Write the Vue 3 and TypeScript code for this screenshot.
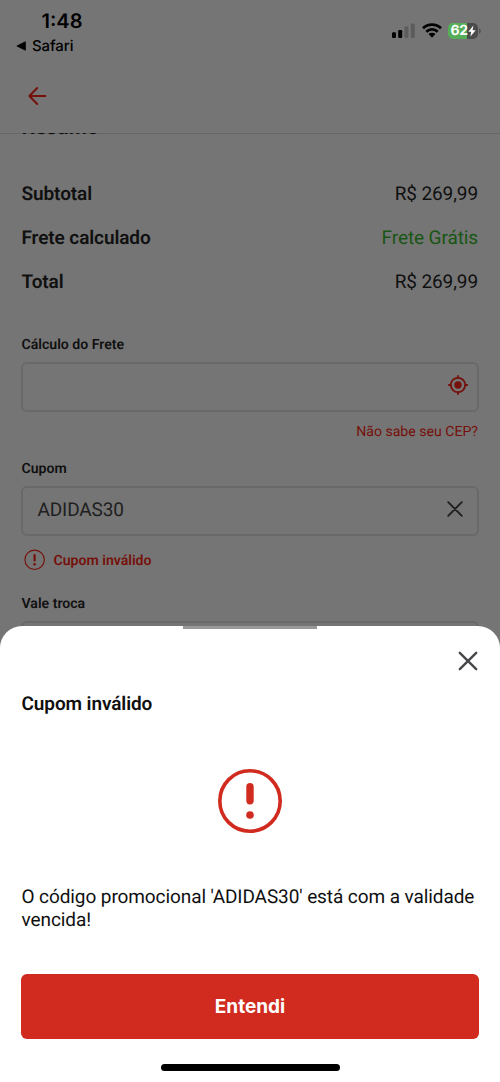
<script setup lang="ts">
interface SummaryRow {
  label: string
  value: string
  free?: boolean
}

const rows: SummaryRow[] = [
  { label: 'Subtotal', value: 'R$ 269,99' },
  { label: 'Frete calculado', value: 'Frete Grátis', free: true },
  { label: 'Total', value: 'R$ 269,99' },
]
</script>

<template>
  <div class="screen">
    <header class="top">
      <div class="status">
        <div class="status-left">
          <div class="time">1:48</div>
          <div class="back-app">
            <svg width="10" height="10" viewBox="0 0 10 10"><path d="M9.4 .8v8.4L.9 5z" fill="#000" stroke="#000" stroke-width=".8" stroke-linejoin="round" /></svg>
            <span>Safari</span>
          </div>
        </div>
        <div class="status-right">
          <svg class="signal" width="24" height="16" viewBox="0 0 24 16">
            <rect x="0" y="9.3" width="4" height="5.7" rx="1.2" />
            <rect x="6.2" y="7" width="4" height="8" rx="1.2" />
            <rect x="12.4" y="3.4" width="4" height="11.6" rx="1.2" fill="#5c5c5c" />
            <rect x="18.8" y=".5" width="4" height="14.5" rx="1.2" fill="#5c5c5c" />
          </svg>
          <svg class="wifi" width="20" height="15" viewBox="0 0 20 15">
            <g fill="none" stroke="#000" stroke-width="2.7">
              <path d="M1 5.2C6 .3 14 .3 19 5.2" />
              <path d="M4.3 8.7c3.2-3.1 8.2-3.1 11.4 0" />
            </g>
            <path d="M6.5 11.1c2-1.8 5-1.8 7 0L10 14.7z" />
          </svg>
          <div class="battery">
            <span>62</span>
            <svg width="8" height="12" viewBox="0 0 8 12"><path d="M5.4.4.3 6.7h2.9L2.4 11.6 7.7 5.3H4.6z" fill="#fff" /></svg>
          </div>
          <svg class="tip" width="2" height="6" viewBox="0 0 2 6"><path d="M0 .3C2.6 1.2 2.6 4.8 0 5.7z" fill="#575757" /></svg>
        </div>
      </div>
      <svg class="arrow" width="20" height="20" viewBox="0 0 20 20" fill="none" stroke="#75100a" stroke-width="2" stroke-linecap="round" stroke-linejoin="round"><path d="M10.2 2 2.4 10l7.8 8M2.4 10h16" /></svg>
    </header>

    <main>
      <div class="clip"><h2>Resumo</h2></div>
      <div class="summary">
        <div v-for="row in rows" :key="row.label" class="row">
          <strong>{{ row.label }}</strong>
          <span :class="{ free: row.free }">{{ row.value }}</span>
        </div>
      </div>

      <label class="frete-label">Cálculo do Frete</label>
      <div class="field">
        <svg class="locate" width="20" height="20" viewBox="0 0 20 20" fill="none" stroke="#75100a" stroke-width="1.8">
          <circle cx="10" cy="10" r="7.2" /><circle cx="10" cy="10" r="3.7" fill="#75100a" stroke="none" />
          <path d="M10 .2v3M10 16.8v3M.2 10h3M16.8 10h3" />
        </svg>
      </div>
      <a class="cep">Não sabe seu CEP?</a>

      <label class="cupom-label">Cupom</label>
      <div class="field">
        <span>ADIDAS30</span>
        <svg class="clear" width="16" height="16" viewBox="0 0 16 16" fill="none" stroke="#202020" stroke-width="1.9" stroke-linecap="round"><path d="m1.2 1.2 13.6 13.6M14.8 1.2 1.2 14.8" /></svg>
      </div>
      <div class="error">
        <svg width="22" height="22" viewBox="0 0 22 22" fill="none" stroke="#75100a">
          <circle cx="10.6" cy="10.8" r="9.7" stroke-width="1.1" /><path d="M10.6 6v5.4" stroke-width="2.2" stroke-linecap="round" /><circle cx="10.6" cy="15.3" r="1.3" fill="#75100a" stroke="none" />
        </svg>
        <span>Cupom inválido</span>
      </div>

      <label class="vale-label">Vale troca</label>
      <div class="field"></div>
    </main>

    <section class="sheet">
      <div class="handle"></div>
      <svg class="close" width="20" height="20" viewBox="0 0 20 20" fill="none" stroke="#48484a" stroke-width="2.4" stroke-linecap="round"><path d="m1.8 1.8 16.4 16.4M18.2 1.8 1.8 18.2" /></svg>
      <h1>Cupom inválido</h1>
      <svg class="alert" width="64" height="64" viewBox="0 0 64 64" fill="none" stroke="#d02b1e">
        <circle cx="32" cy="32" r="30.2" stroke-width="3.6" /><path d="M32 17.8v14" stroke-width="7.4" stroke-linecap="round" /><circle cx="32" cy="46" r="3.8" fill="#d02b1e" stroke="none" />
      </svg>
      <p>O código promocional 'ADIDAS30' está com a validade vencida!</p>
      <button type="button">Entendi</button>
      <div class="home"></div>
    </section>
  </div>
</template>

<style>
body { margin: 0; }
</style>

<style scoped>
* { box-sizing: border-box; }
.screen {
  position: relative;
  width: 500px;
  height: 1082px;
  overflow: hidden;
  background: #757575;
  color: #101010;
  font-family: Roboto, "Liberation Sans", sans-serif;
  text-rendering: geometricPrecision;
}
.top {
  height: 134px;
  border-bottom: 1px solid #666;
}
.status {
  height: 86px;
  display: flex;
  justify-content: space-between;
  color: #000;
  font-family: Inter, "Liberation Sans", sans-serif;
}
.status-left { padding: 9px 0 0 16px; }
.time {
  padding-left: 25.5px;
  font-size: 20px;
  line-height: 24px;
  font-weight: 600;
}
.back-app {
  display: flex;
  align-items: center;
  gap: 6px;
  margin-top: 3px;
  font-size: 15px;
  line-height: 19px;
  font-weight: 500;
  letter-spacing: -.1px;
}
.status-right {
  display: flex;
  align-items: flex-start;
  padding: 23px 19px 0 0;
}
.wifi { margin-left: 6px; }
.battery {
  display: flex;
  align-items: center;
  width: 30px;
  height: 16px;
  margin: 0 1px 0 6px;
  padding-left: 2.5px;
  border-radius: 5px;
  background: linear-gradient(90deg, #55ae57 62%, #4b4b4b 62%);
  color: #fff;
  font-size: 14px;
  font-weight: 700;
  line-height: 16px;
  letter-spacing: -.3px;
}
.tip { margin-top: 5px; }
.arrow { display: block; margin-left: 27px; }
main { padding: 0 22px 0 21.5px; }
.clip {
  display: flex;
  align-items: flex-end;
  height: 5px;
  margin-top: -1px;
  overflow: hidden;
}
h2 { margin: 0; font-size: 21px; line-height: 20px; }
.summary {
  display: flex;
  flex-direction: column;
  gap: 20px;
  padding-top: 44px;
}
.row {
  display: flex;
  justify-content: space-between;
  font-size: 19px;
  line-height: 24px;
  letter-spacing: -.1px;
}
strong { font-weight: 600; }
.free { color: #195614; }
label {
  display: block;
  font-size: 14.1px;
  line-height: 18px;
  font-weight: 600;
}
.frete-label { margin-top: 42px; }
.field {
  display: flex;
  align-items: center;
  height: 50px;
  margin: 8px -1px 0 -.5px;
  padding: 0 14.5px 5px;
  border: 2px solid #696969;
  border-radius: 6px;
  font-size: 19px;
  letter-spacing: -.12px;
  color: #202020;
}
.field span { padding-top: 2px; }
.field svg { margin-left: auto; }
.field .locate { margin-right: -5px; }
.cep {
  display: block;
  margin-top: 11px;
  text-align: right;
  color: #75100a;
  font-size: 14.1px;
  line-height: 18px;
}
.cupom-label { margin-top: 19px; }
.error {
  display: flex;
  align-items: center;
  gap: 8px;
  height: 22px;
  margin: 13px 0 0 2px;
  color: #75100a;
  font-size: 14.1px;
  line-height: 20px;
  font-weight: 600;
}
.error span { padding-top: 2px; }
.vale-label { margin-top: 24px; }
.sheet {
  position: absolute;
  inset: 626px 0 0;
  display: flex;
  flex-direction: column;
  padding: 0 21px;
  border-radius: 22px 22px 0 0;
  background: #fff;
}
.handle {
  align-self: center;
  width: 134px;
  height: 3px;
  background: #999;
}
.close { align-self: flex-end; margin: 22px 1px 0 0; }
h1 {
  margin: 21px 0 0 .5px;
  font-size: 19px;
  line-height: 24px;
  font-weight: 600;
  letter-spacing: -.1px;
}
.alert { align-self: center; margin-top: 53px; }
p {
  margin: 52px 0 0 .5px;
  font-size: 19px;
  line-height: 23px;
  letter-spacing: -.09px;
}
button {
  height: 65px;
  margin-top: 43px;
  padding: 0;
  border: 0;
  border-radius: 6px;
  background: #d02b1e;
  color: #fff;
  font: 700 19px/65px Inter, "Liberation Sans", sans-serif;
}
.home {
  align-self: center;
  width: 179px;
  height: 7px;
  margin-top: 25px;
  border-radius: 4px;
  background: #000;
}
</style>
